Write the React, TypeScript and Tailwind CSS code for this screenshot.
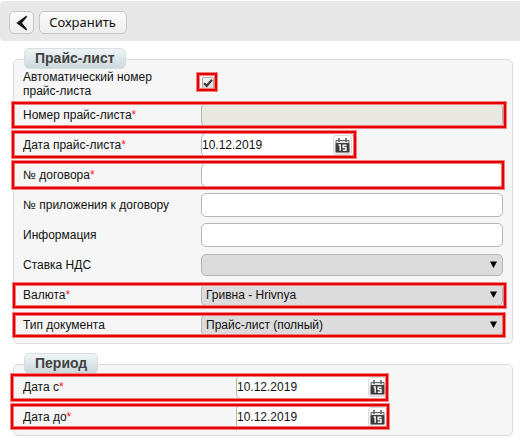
import type { ReactNode } from "react";

/* Red attention frame laid over a row; the position comes in as classes. */
function Frame({ className }: { className: string }) {
  return (
    <div
      className={`pointer-events-none absolute border-2 border-[#e80000] shadow-[0_0_0_1px_#f28080,inset_0_0_0_1px_#ee7c7c] ${className}`}
    />
  );
}

function CalendarIcon() {
  return (
    <span className="flex h-5 w-[19px] shrink-0 items-center justify-center rounded-[3px] border border-[#dadada] bg-linear-to-b from-white to-[#e8e8e8]">
      <svg width="15" height="16" viewBox="0 0 15 16" className="shrink-0">
        <path d="M1 6V3.500H14V6" fill="#e4e4e4" stroke="#666" />
        <path d="M4 1V5M11 1V5" stroke="#666" strokeWidth="1.600" />
        <rect x="0.500" y="6" width="14" height="9.500" rx="0.800" fill="#3c3c3c" />
        <path
          d="M3.500 8H5.200V13.800M11.500 8.200H8.200V10.600H11V13.200H7.700"
          fill="none"
          stroke="#f4f4f4"
          strokeWidth="1.500"
        />
      </svg>
    </span>
  );
}

function Row({
  label,
  required,
  wide,
  children,
}: {
  label: string;
  required?: boolean;
  wide?: boolean;
  children: ReactNode;
}) {
  return (
    <div className="relative flex h-[30px] items-center">
      <label className={`shrink-0 pl-[9px] ${wide ? "w-[222px]" : "w-[187px]"}`}>
        {label}
        {required && <span className="text-[#ff1a1a]">*</span>}
      </label>
      {children}
    </div>
  );
}

function TextBox({ disabled }: { disabled?: boolean }) {
  return (
    <div
      className={`h-6 w-[302px] rounded-[5px] border border-[#b5b5b5] ${disabled ? "bg-[#e9e9e1]" : "bg-white"}`}
    />
  );
}

function DateBox() {
  return (
    <div className="flex h-6 w-[153px] items-center justify-between rounded-[5px] border border-[#b5b5b5] bg-white pr-px">
      <span>10.12.2019</span>
      <CalendarIcon />
    </div>
  );
}

function SelectBox({ text }: { text?: string }) {
  return (
    <div className="flex h-[22px] w-[302px] items-center justify-between rounded-[5px] border border-[#b5b5b5] bg-[#dcdcdc] pr-[5px] pl-1">
      <span>{text}</span>
      <svg width="7" height="7" viewBox="0 0 7 7" className="-mt-px">
        <path d="M0 0.500H7L3.500 7Z" fill="#000" />
      </svg>
    </div>
  );
}

function Panel({ title, className, children }: { title: string; className: string; children: ReactNode }) {
  return (
    <section className={`relative ml-[13px] w-[500px] rounded-[5px] border border-[#dcdcdc] bg-[#f6f6f6] ${className}`}>
      <h2 className="absolute -top-[12px] left-[10px] h-[21px] rounded-[5px] border border-[#d8dfe0] bg-linear-to-b from-[#eff5f6] to-[#cbd8dc] px-[10px] text-[14px] leading-[19px] font-bold text-[#424242]">
        {title}
      </h2>
      {children}
    </section>
  );
}

const buttonStyle =
  "flex h-[23px] items-center justify-center rounded-[5px] border border-[#c6c6c6] bg-linear-to-b from-[#fbfbfb] to-[#eeeeee]";

export default function App() {
  return (
    <main className="h-[440px] w-[520px] overflow-hidden bg-white pt-px font-['Liberation_Sans',Arial,sans-serif] text-[12px] leading-[14px] text-[#111]">
      <header className="flex h-10 items-center gap-[5px] rounded-l-[4px] bg-[#e8e8e8] pt-[3px] pl-[9px]">
        <button className={`${buttonStyle} w-[25px]`} aria-label="Назад">
          <svg width="12" height="16" viewBox="0 0 12 16">
            <path d="M10.500 0.500L0.300 8L10.500 15.500L11 14L6 8L11 2Z" fill="#111" />
          </svg>
        </button>
        <button className={`${buttonStyle} w-[88px] pr-px pb-[2px] font-['Noto_Sans',sans-serif] text-[13px]`}>
          Сохранить
        </button>
      </header>

      <Panel title="Прайс-лист" className="mt-[18px] h-[285px] pt-[10px]">
        <div className="relative flex h-[30px] items-center">
          <label className="w-[188px] shrink-0 pr-10 pb-[2px] pl-[9px]">Автоматический номер прайс-листа</label>
          <span className="mt-[-4px] flex size-[12px] items-center justify-center rounded-[2px] border border-[#aaa] bg-linear-to-b from-[#f4f4f4] to-[#dadada]">
            <svg width="10" height="10" viewBox="0 0 10 10" className="shrink-0">
              <path d="M1 5.200L3.700 7.800L9 1.800" fill="none" stroke="#3c3c3c" strokeWidth="2.200" />
            </svg>
          </span>
          <Frame className="top-[3px] left-[183px] h-[18px] w-5" />
        </div>
        <Row label="Номер прайс-листа" required>
          <TextBox disabled />
          <Frame className="top-[2px] -left-[2px] h-[26px] w-[494px]" />
        </Row>
        <Row label="Дата прайс-листа" required>
          <DateBox />
          <Frame className="top-[1px] -left-[2px] h-[27px] w-[344px]" />
        </Row>
        <Row label="№ договора" required>
          <TextBox />
          <Frame className="top-[1px] -left-[2px] h-7 w-[492px]" />
        </Row>
        <Row label="№ приложения к договору">
          <TextBox />
        </Row>
        <Row label="Информация">
          <TextBox />
        </Row>
        <Row label="Ставка НДС">
          <SelectBox />
        </Row>
        <Row label="Валюта" required>
          <SelectBox text="Гривна - Hrivnya" />
          <Frame className="top-[3px] -left-[1px] h-[25px] w-[493px]" />
        </Row>
        <Row label="Тип документа">
          <SelectBox text="Прайс-лист (полный)" />
          <Frame className="top-[3px] -left-[1px] h-6 w-[492px]" />
        </Row>
      </Panel>

      <Panel title="Период" className="mt-5 h-[72px] pt-[7px]">
        <Row label="Дата с" required wide>
          <DateBox />
          <Frame className="top-[2px] -left-[3px] h-[27px] w-[377px]" />
        </Row>
        <Row label="Дата до" required wide>
          <DateBox />
          <Frame className="top-[2px] -left-[3px] h-[25px] w-[378px]" />
        </Row>
      </Panel>
    </main>
  );
}
